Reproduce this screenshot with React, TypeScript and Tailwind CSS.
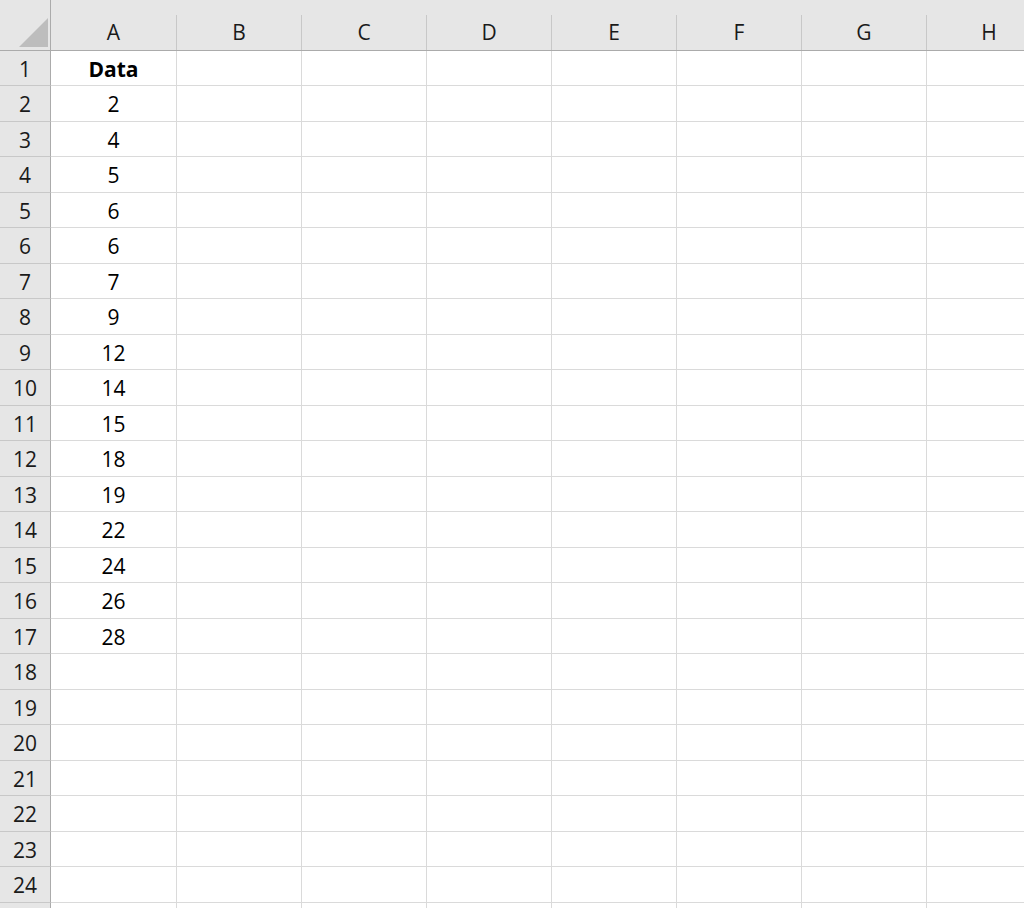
const cols = ['A', 'B', 'C', 'D', 'E', 'F', 'G', 'H'];
const widths = ['w-[126px]', 'w-[125px]', 'w-[125px]', 'w-[125px]', 'w-[125px]', 'w-[125px]', 'w-[125px]', 'w-[125px]'];
const data: Record<number, string> = {
  1: 'Data',
  2: '2',
  3: '4',
  4: '5',
  5: '6',
  6: '6',
  7: '7',
  8: '9',
  9: '12',
  10: '14',
  11: '15',
  12: '18',
  13: '19',
  14: '22',
  15: '24',
  16: '26',
  17: '28',
};

const rows = Array.from({ length: 25 }, (_, i) => i + 1);

const Corner = () => (
  <div className="w-[51px] h-[51px] shrink-0 bg-[#e6e6e6] border-r border-b border-[#ababab] relative">
    <svg width="50" height="50" className="absolute left-0 top-0">
      <polygon points="19,47 48,47 48,18" fill="#bdbdbd" />
    </svg>
  </div>
);

const App = () => {
  return (
    <div
      className="w-[1024px] h-[908px] overflow-hidden bg-white text-[21px]"
      style={{ fontFamily: '"Open Sans", "Noto Sans", sans-serif' }}
    >
      {/* column header */}
      <div className="flex">
        <Corner />
        {cols.map((c, i) => (
          <div
            key={c}
            className={`h-[51px] shrink-0 bg-[#e6e6e6] border-b border-[#ababab] flex flex-col justify-end ${widths[i]}`}
          >
            <div className="h-[35px] flex items-center justify-center text-[#1a1a1a] pt-[1px] border-r border-[#c8c8c8]">
              {c}
            </div>
          </div>
        ))}
      </div>

      {rows.map((r) => (
        <div key={r} className={`flex ${r % 2 === 1 ? 'h-[35px]' : 'h-[36px]'}`}>
          <div className="w-[51px] shrink-0 bg-[#e6e6e6] border-r border-b border-r-[#ababab] border-b-[#c8c8c8] flex items-center justify-center text-[#1a1a1a] pt-[3px]">
            {r < 25 ? r : ''}
          </div>
          {cols.map((c, i) => (
            <div
              key={c}
              className={`shrink-0 border-b border-r border-[#dadada] flex items-center justify-center text-black pt-[3px] ${widths[i]} ${
                r === 1 && c === 'A' ? 'font-bold' : ''
              }`}
            >
              {c === 'A' ? data[r] ?? '' : ''}
            </div>
          ))}
        </div>
      ))}
    </div>
  );
};

export default App;
